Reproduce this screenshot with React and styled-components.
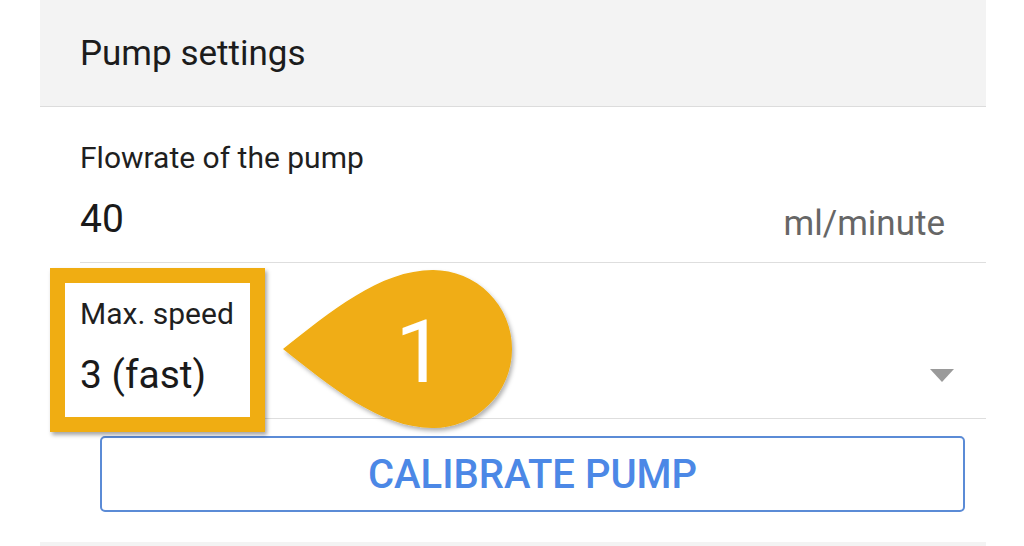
import React from "react";
import styled, { createGlobalStyle } from "styled-components";

const GlobalStyle = createGlobalStyle`
    html, body {
        margin: 0;
        padding: 0;
        background: #ffffff;
    }
    body {
        font-family: Roboto, "Noto Sans", "Liberation Sans", sans-serif;
        color: #1a1a1a;
    }
`;

const Page = styled.div`
    position: relative;
    width: 1024px;
    height: 546px;
    overflow: hidden;
    padding-left: 40px;
    box-sizing: border-box;
`;

const Card = styled.div`
    width: 946px;
    display: flex;
    flex-direction: column;
`;

const Header = styled.div`
    height: 106px;
    background: #f3f3f3;
    border-bottom: 1px solid #dcdcdc;
    display: flex;
    align-items: center;
    padding-left: 40px;
    font-size: 35px;
    line-height: 41px;
    color: #1c1c1c;
`;

const Field = styled.div`
    margin-left: 40px;
    padding: 33px 0 20px;
    border-bottom: 1px solid #dedede;
    display: flex;
    flex-direction: column;
    gap: 21px;
`;

const Label = styled.div`
    font-size: 30px;
    line-height: 35px;
    color: #1f1f1f;
`;

const ValueRow = styled.div`
    display: flex;
    justify-content: space-between;
    align-items: ${(p) => (p.$select ? "center" : "baseline")};
    padding-right: ${(p) => (p.$select ? "32px" : "41px")};
    height: 46px;
`;

const Value = styled.div`
    font-size: 39px;
    line-height: 46px;
    color: #1a1a1a;
`;

const Unit = styled.div`
    font-size: 35px;
    line-height: 46px;
    color: #666666;
    position: relative;
    top: 3px;
`;

const Caret = styled.div`
    width: 0;
    height: 0;
    border-left: 12.5px solid transparent;
    border-right: 12.5px solid transparent;
    border-top: 13px solid #9a9a9a;
`;

const CalibrateButton = styled.button`
    margin: 17px 21px 30px 60px;
    height: 76px;
    border: 2px solid #5b8bd6;
    border-radius: 5px;
    background: #ffffff;
    color: #4c88e6;
    font-family: Roboto, "Noto Sans", sans-serif;
    font-size: 40px;
    font-weight: 500;
    cursor: pointer;
`;

const NextHeader = styled.div`
    height: 10px;
    background: #f3f3f3;
`;

const Highlight = styled.div`
    position: absolute;
    left: 50px;
    top: 268px;
    width: 215px;
    height: 164px;
    box-sizing: border-box;
    border: 15px solid #f0ad12;
    box-shadow: 2px 3px 4px rgba(0, 0, 0, 0.35);
    pointer-events: none;
`;

const Callout = styled.svg`
    position: absolute;
    left: 270px;
    top: 262px;
    width: 260px;
    height: 180px;
    overflow: visible;
    pointer-events: none;
`;

const StepBadge = ({ number }) => (
    <Callout viewBox="0 0 260 180">
        <defs>
            <filter id="badgeShadow" x="-10%" y="-10%" width="130%" height="130%">
                <feDropShadow dx="2" dy="3" stdDeviation="2" floodColor="#000" floodOpacity="0.3" />
            </filter>
        </defs>
        <path
            d="M13,87 C60,50 110,8 163,8 A79,79 0 1,1 163,166 C110,166 60,124 13,87 Z"
            fill="#f0ad12"
            filter="url(#badgeShadow)"
        />
        <text
            x="150"
            y="120"
            textAnchor="middle"
            fill="#ffffff"
            fontFamily="Roboto, sans-serif"
            fontSize="88"
        >
            {number}
        </text>
    </Callout>
);

const App = () => {
    return (
        <>
            <GlobalStyle />
            <Page>
                <Card>
                    <Header>Pump settings</Header>
                    <Field>
                        <Label>Flowrate of the pump</Label>
                        <ValueRow>
                            <Value>40</Value>
                            <Unit>ml/minute</Unit>
                        </ValueRow>
                    </Field>
                    <Field>
                        <Label>Max. speed</Label>
                        <ValueRow $select>
                            <Value>3 (fast)</Value>
                            <Caret />
                        </ValueRow>
                    </Field>
                    <CalibrateButton>CALIBRATE PUMP</CalibrateButton>
                    <NextHeader />
                </Card>
                <Highlight />
                <StepBadge number="1" />
            </Page>
        </>
    );
};

export default App;
